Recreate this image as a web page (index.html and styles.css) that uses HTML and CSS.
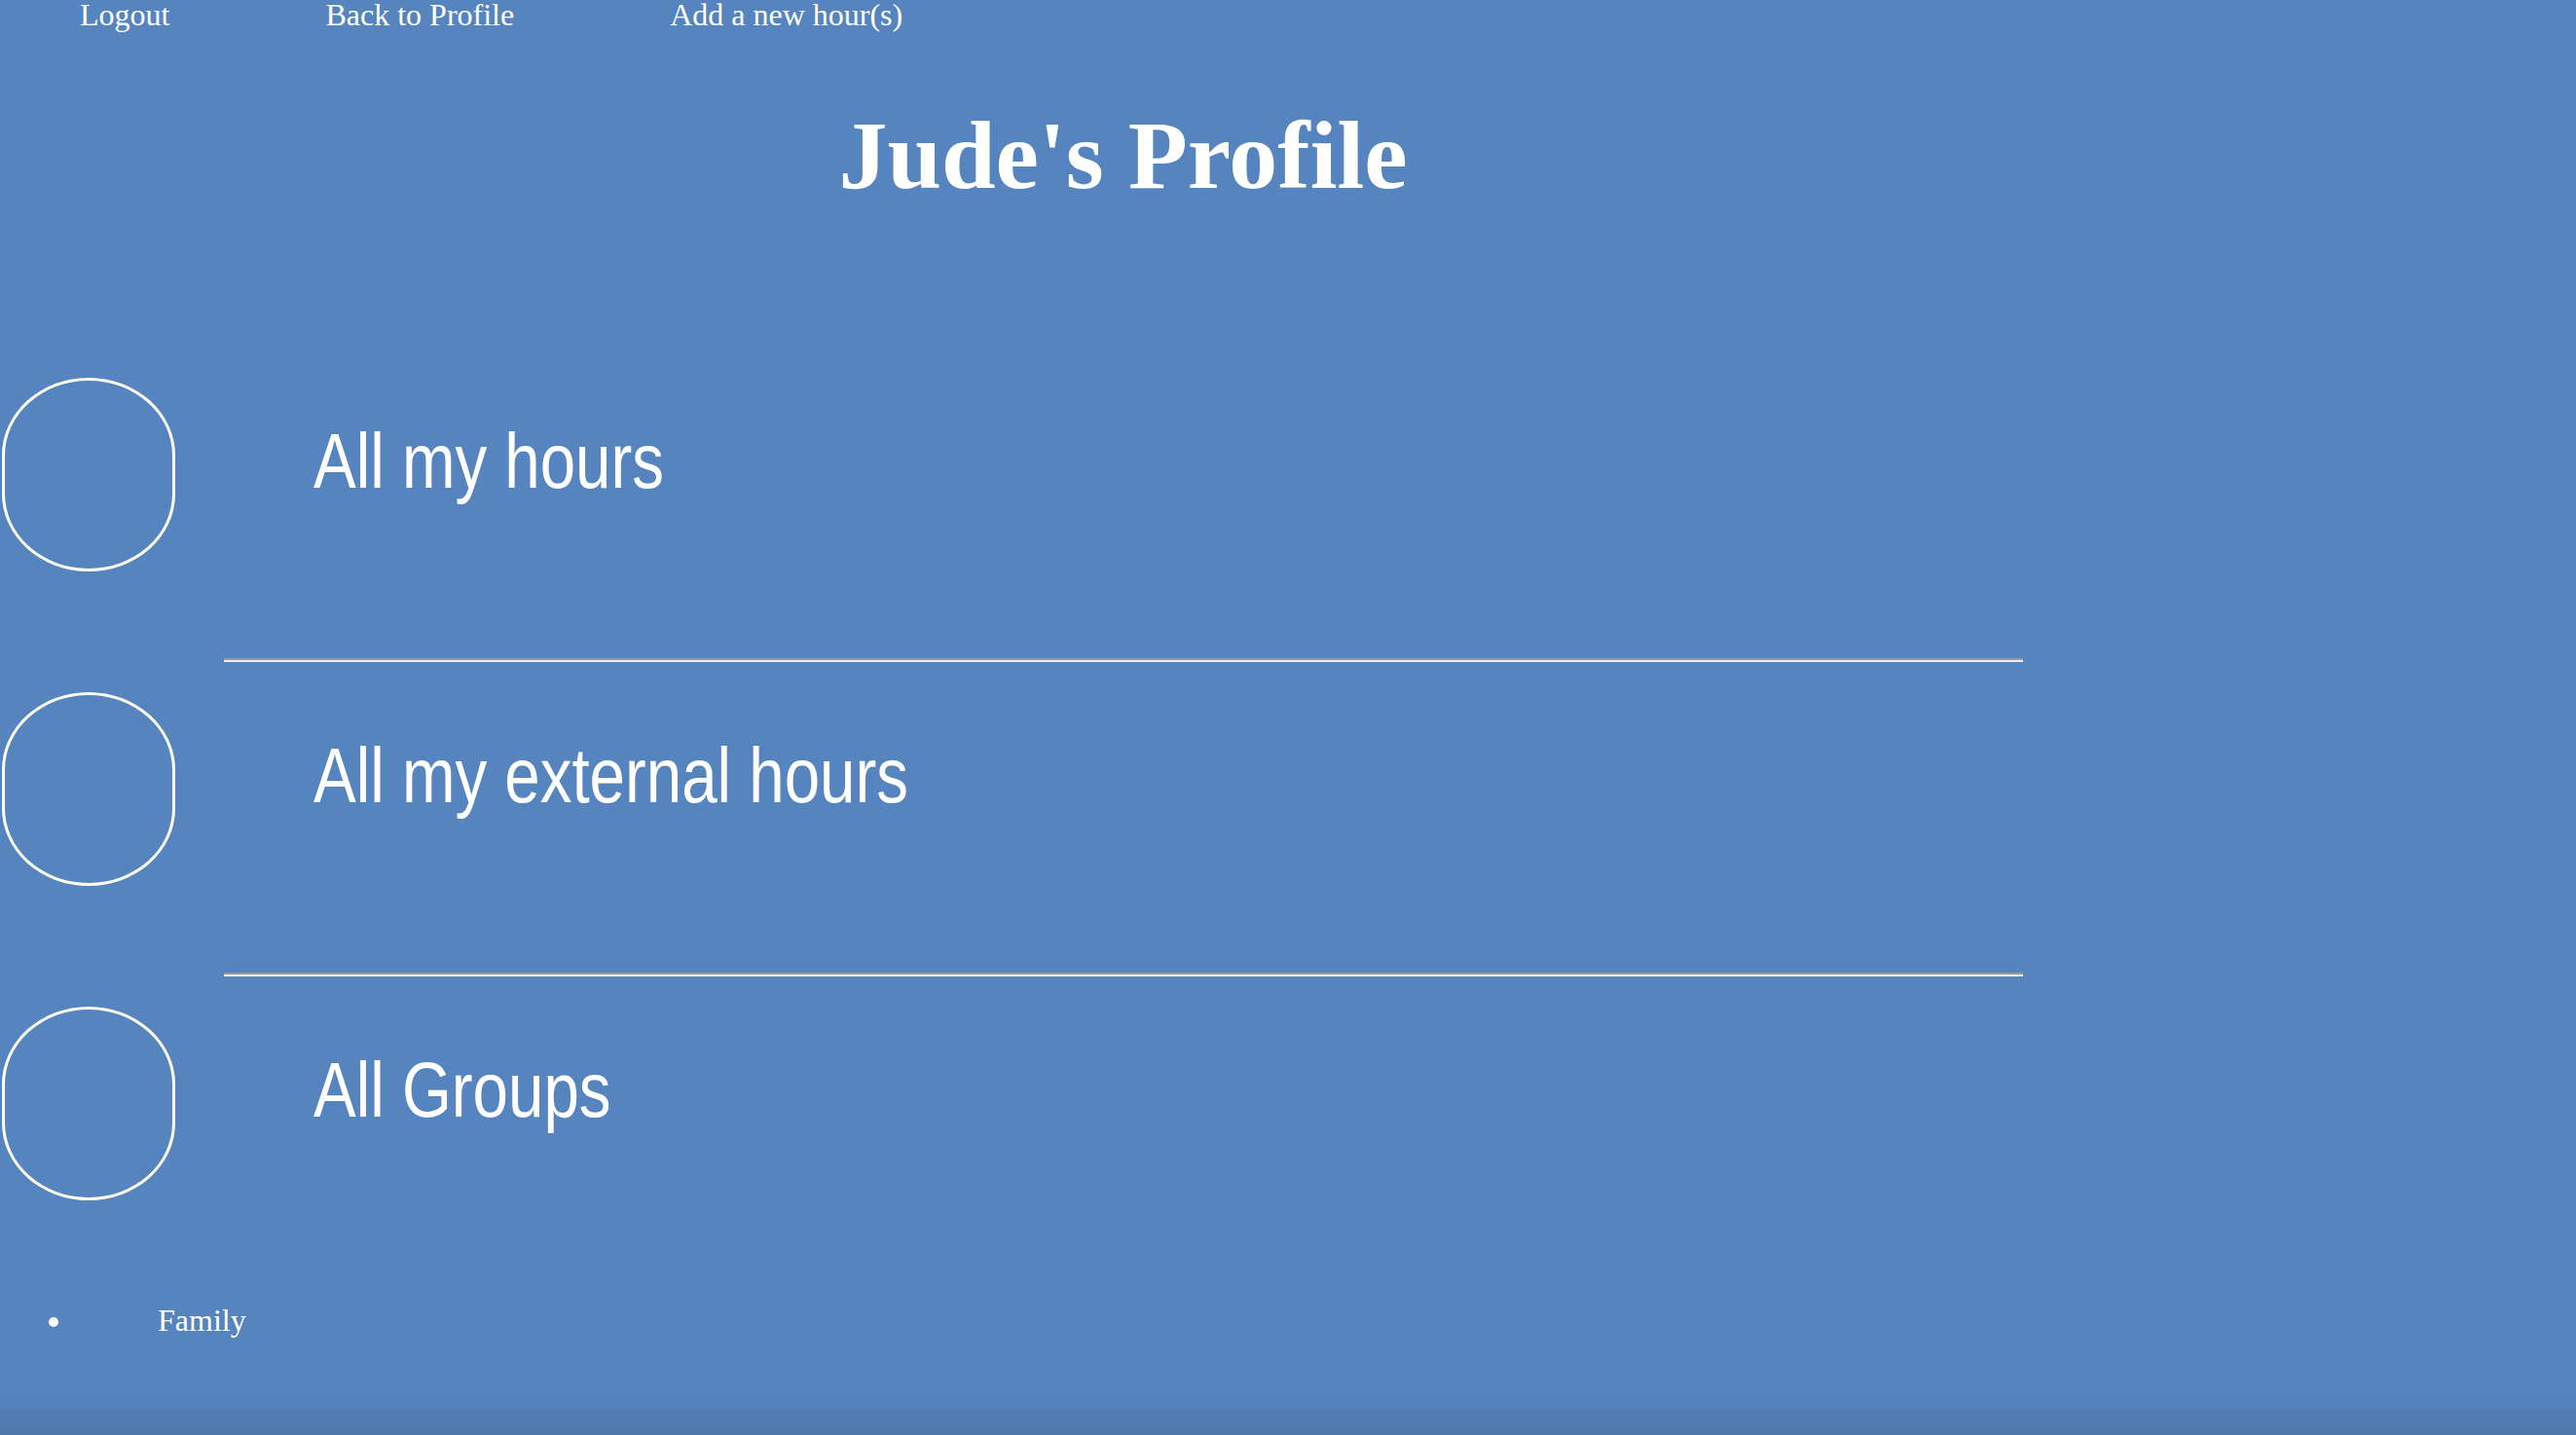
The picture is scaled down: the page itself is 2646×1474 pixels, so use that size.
FILE: index.html
```html
<!DOCTYPE html>
<html lang="en">
<head>
<meta charset="utf-8">
<title>Jude's Profile</title>
<link rel="stylesheet" href="styles.css">
</head>
<body>
<nav class="topnav">
  <a class="navlink" href="#">Logout</a>
  <a class="navlink" href="#">Back to Profile</a>
  <a class="navlink" href="#">Add a new hour(s)</a>
</nav>
<main class="main">
  <h1 class="title">Jude's Profile</h1>
  <section class="rows">
    <div class="row">
      <div class="avatar"></div>
      <div class="row-label"><span class="narrow">All my hours</span></div>
    </div>
    <hr class="divider">
    <div class="row">
      <div class="avatar"></div>
      <div class="row-label"><span class="narrow">All my external hours</span></div>
    </div>
    <hr class="divider">
    <div class="row">
      <div class="avatar"></div>
      <div class="row-label"><span class="narrow">All Groups</span></div>
    </div>
  </section>
  <ul class="groups">
    <li class="group"><a class="group-link" href="#">Family</a></li>
  </ul>
</main>
</body>
</html>
```
FILE: styles.css
```css
html {
  background: #5584bf;
}
body {
  margin: 0;
  min-height: 100vh;
  background: linear-gradient(to bottom, #5584bf 0, #5584bf calc(100% - 48px), #4e79ae 100%);
  color: #ffffff;
  font-family: "Liberation Serif", "Times New Roman", serif;
  overflow: hidden;
}
.topnav {
  display: flex;
  gap: 160px;
  padding-left: 82px;
  height: 30px;
  line-height: 30px;
  font-size: 32px;
}
.navlink {
  color: #ffffff;
  text-decoration: none;
}
.main {
  width: 2307px;
}
.title {
  margin: 80px 0 0;
  text-align: center;
  font-size: 100px;
  line-height: 100px;
  font-weight: bold;
}
.rows {
  margin-top: 178px;
}
.row {
  display: flex;
  align-items: flex-start;
  margin: 31px 0 89px;
}
.rows .row:first-child {
  margin-top: 0;
}
.rows .row:last-child {
  margin-bottom: 0;
}
.avatar {
  box-sizing: border-box;
  width: 178px;
  height: 199px;
  margin-left: 2px;
  border: 3px solid #fffff0;
  border-radius: 50% / 40%;
  flex: none;
}
.row-label {
  margin-top: 46px;
  margin-left: 142px;
  font-family: "Liberation Sans Narrow", "Arial Narrow", "Liberation Sans", Arial, sans-serif;
  font-size: 80px;
  line-height: 80px;
  white-space: nowrap;
}
.narrow {
  display: inline-block;
  transform: scaleX(0.818);
  transform-origin: left center;
}
.divider {
  box-sizing: border-box;
  width: 1848px;
  height: 4px;
  margin: 0 auto;
  border: 0;
  border-top: 2px solid #9a9a9a;
  border-bottom: 2px solid #eeeeee;
}
.groups {
  margin: 105px 0 0;
  padding-left: 76px;
  font-size: 32px;
}
.group-link {
  display: inline-block;
  margin-left: 86px;
  color: #ffffff;
  text-decoration: none;
}
```
